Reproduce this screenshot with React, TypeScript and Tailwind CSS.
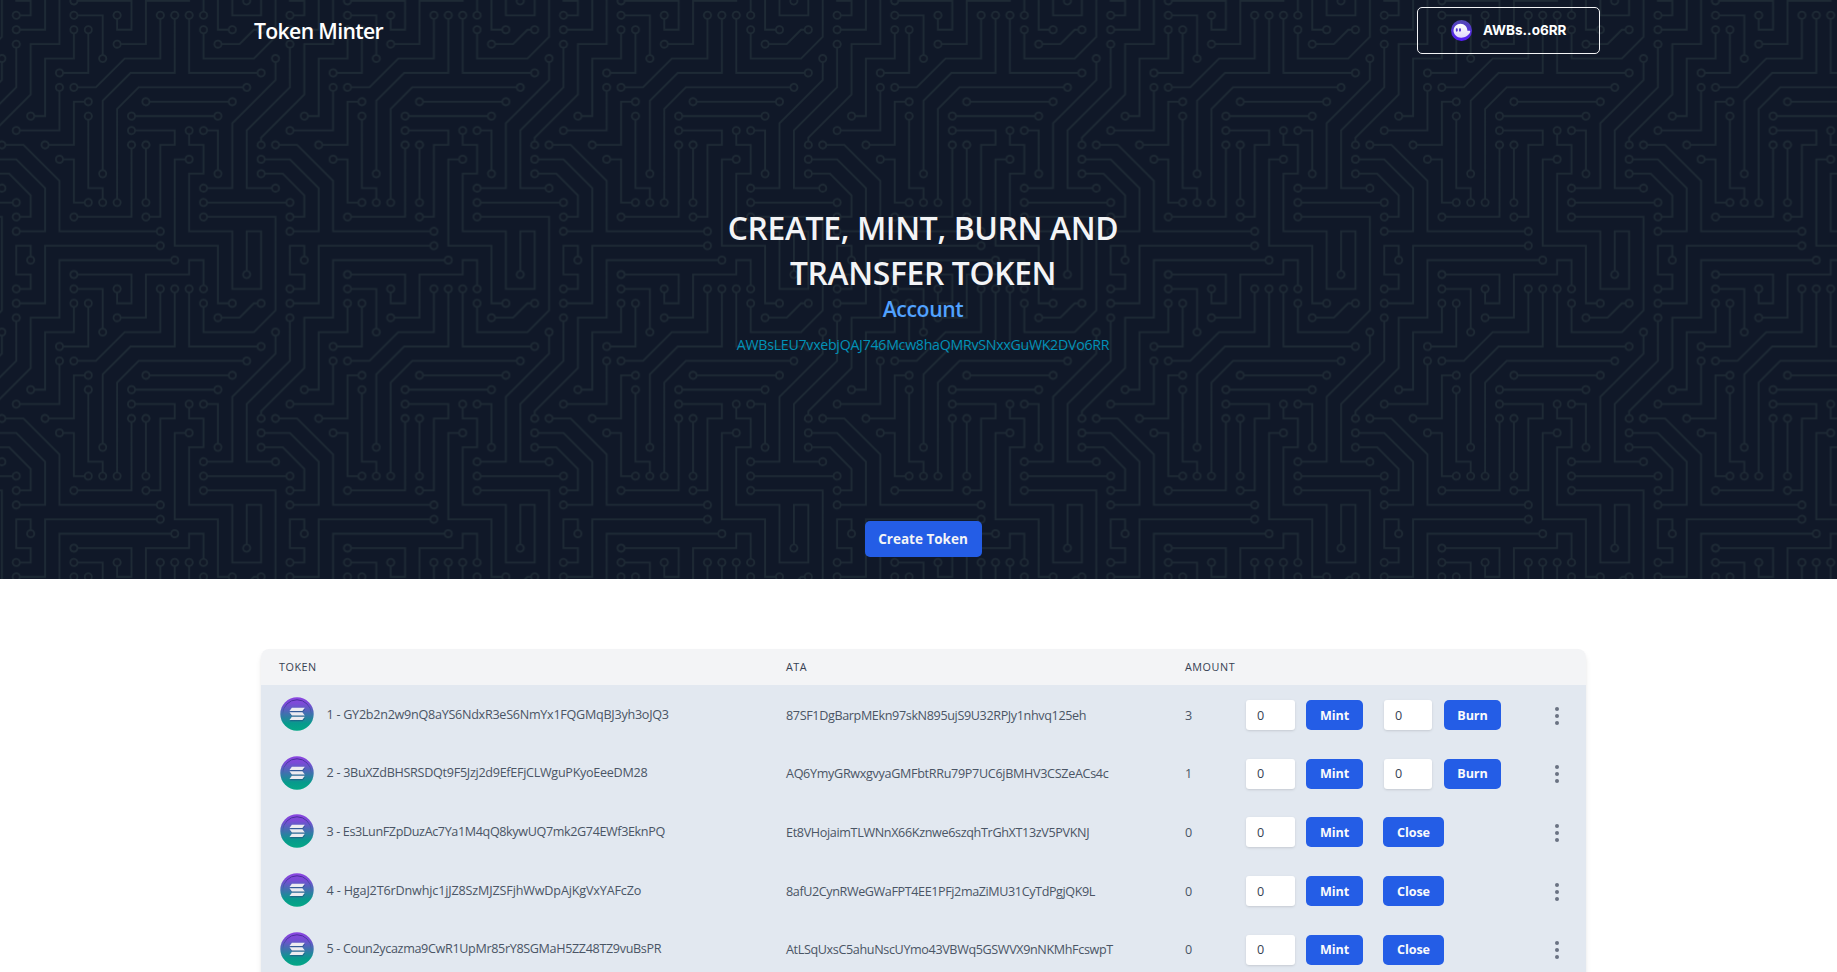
import React from "react";

const BOARD_PATH =
  "M44.1 224a5 5 0 1 1 0 2H0v-2h44.1zm160 48a5 5 0 1 1 0 2H82v-2h122.1zm57.8-46a5 5 0 1 1 0-2H304v2h-42.1zm0 16a5 5 0 1 1 0-2H304v2h-42.1zm6.2-114a5 5 0 1 1 0 2h-86.2a5 5 0 1 1 0-2h86.2zm-256-48a5 5 0 1 1 0 2H0v-2h12.1zm185.8 34a5 5 0 1 1 0-2h86.2a5 5 0 1 1 0 2h-86.2zM258 12.1a5 5 0 1 1-2 0V0h2v12.1zm-64 208a5 5 0 1 1-2 0v-54.2a5 5 0 1 1 2 0v54.2zm48-198.2V80h62v2h-64V21.9a5 5 0 1 1 2 0zm16 16V64h46v2h-48V37.9a5 5 0 1 1 2 0zm-128 96V208h16v12.1a5 5 0 1 1-2 0V210h-16v-76.1a5 5 0 1 1 2 0zm-5.9-21.9a5 5 0 1 1 0 2H114v48H85.9a5 5 0 1 1 0-2H112v-48h12.1zm-6.2 130a5 5 0 1 1 0-2H176v-74.1a5 5 0 1 1 2 0V242h-60.1zm-16-64a5 5 0 1 1 0-2H114v48h10.1a5 5 0 1 1 0 2H112v-48h-10.1zM66 284.1a5 5 0 1 1-2 0V274H50v30h-2v-32h18v12.1zM236.1 176a5 5 0 1 1 0 2H226v94h48v32h-2v-30h-48v-98h12.1zm25.8-30a5 5 0 1 1 0-2H274v44.1a5 5 0 1 1-2 0V146h-10.1zm-64 96a5 5 0 1 1 0-2H208v-80h16v-14h-42.1a5 5 0 1 1 0-2H226v18h-16v80h-12.1zm86.2-210a5 5 0 1 1 0 2H272V0h2v32h10.1zM98 101.9V146H53.9a5 5 0 1 1 0-2H96v-42.1a5 5 0 1 1 2 0zM53.9 34a5 5 0 1 1 0-2H80V0h2v34H53.9zm60.1 3.9V66H82v64H69.9a5 5 0 1 1 0-2H80V64h32V37.9a5 5 0 1 1 2 0zM101.9 82a5 5 0 1 1 0-2H128V37.9a5 5 0 1 1 2 0V82h-28.1zm16-64a5 5 0 1 1 0-2H146v44.1a5 5 0 1 1-2 0V18h-26.1zm102.2 270a5 5 0 1 1 0 2H98v14h-2v-16h124.1zM242 149.9V160h16v34h-16v62h48v48h-2v-46h-48v-66h16v-30h-16v-12.1a5 5 0 1 1 2 0zM53.9 18a5 5 0 1 1 0-2H64V2H48V0h18v18H53.9zm112 32a5 5 0 1 1 0-2H192V0h50v2h-48v48h-28.1zm-48-48a5 5 0 0 1-9.8-2h2.07a3 3 0 1 0 5.66 0H178v34h-18V21.9a5 5 0 1 1 2 0V32h14V2h-58.1zm0 96a5 5 0 1 1 0-2H137l32-32h39V21.9a5 5 0 1 1 2 0V66h-40.17l-32 32H117.9zm28.1 90.1a5 5 0 1 1-2 0v-76.51L175.59 80H224V21.9a5 5 0 1 1 2 0V82h-49.59L146 112.41v75.69zm16 32a5 5 0 1 1-2 0v-99.51L184.59 96H300.1a5 5 0 0 1 3.9-3.9v2.07a3 3 0 0 0 0 5.66v2.07a5 5 0 0 1-3.9-3.9H185.41L162 121.41v98.69zm-144-64a5 5 0 1 1-2 0v-3.51l48-48V48h32V0h2v50H66v55.41l-48 48v2.69zM50 53.9v43.51l-48 48V208h26.1a5 5 0 1 1 0 2H0v-65.41l48-48V53.9a5 5 0 1 1 2 0zm-16 16V89.41l-34 34v-2.82l32-32V69.9a5 5 0 1 1 2 0zM12.1 32a5 5 0 1 1 0 2H9.41L0 43.41V40.6L8.59 32h3.51zm265.8 18a5 5 0 1 1 0-2h18.69l7.41-7.41v2.82L297.41 50H277.9zm-16 160a5 5 0 1 1 0-2H288v-71.41l16-16v2.82l-14 14V210h-28.1zm-208 32a5 5 0 1 1 0-2H64v-22.59L40.59 194H21.9a5 5 0 1 1 0-2H41.41L66 216.59V242H53.9zm150.2 14a5 5 0 1 1 0 2H96v-56.6L56.6 162H37.9a5 5 0 1 1 0-2h19.5L98 200.6V256h106.1zm-150.2 2a5 5 0 1 1 0-2H80v-46.59L48.59 178H21.9a5 5 0 1 1 0-2H49.41L82 208.59V258H53.9zM34 39.8v1.61L9.41 66H0v-2h8.59L32 40.59V0h2v39.8zM2 300.1a5 5 0 0 1 3.9 3.9H3.83A3 3 0 0 0 0 302.17V256h18v48h-2v-46H2v42.1zM34 241v63h-2v-62H0v-2h34v1zM17 18H0v-2h16V0h2v18h-1zm273-2h14v2h-16V0h2v16zm-32 273v15h-2v-14h-14v14h-2v-16h18v1zM0 92.1A5.02 5.02 0 0 1 6 97a5 5 0 0 1-6 4.9v-2.07a3 3 0 1 0 0-5.66V92.1zM80 272h2v32h-2v-32zm37.9 32h-2.07a3 3 0 0 0-5.66 0h-2.07a5 5 0 0 1 9.8 0zM5.9 0A5.02 5.02 0 0 1 0 5.9V3.83A3 3 0 0 0 3.83 0H5.9zm294.2 0h2.07A3 3 0 0 0 304 3.83V5.9a5 5 0 0 1-3.9-5.9zm3.9 300.1v2.07a3 3 0 0 0-1.83 1.83h-2.07a5 5 0 0 1 3.9-3.9z";

const PADS: [number, number][] = [
  [49, 225], [209, 273], [257, 225], [257, 241], [273, 129], [177, 129], [17, 81], [193, 113], [289, 113],
  [257, 17], [193, 225], [193, 161], [241, 17], [257, 33], [129, 129], [145, 225], [129, 113], [81, 161],
  [113, 241], [177, 161], [97, 177], [129, 225], [65, 289], [241, 177], [257, 145], [273, 193], [193, 241],
  [177, 145], [289, 33], [49, 145], [97, 97], [49, 33], [113, 33], [65, 129], [97, 81], [129, 33], [113, 17],
  [145, 65], [225, 289], [241, 145], [49, 17], [161, 49], [161, 17], [113, 97], [209, 17], [145, 193],
  [225, 17], [161, 225], [17, 161], [33, 209], [49, 49], [33, 65], [17, 33], [273, 49], [257, 209],
  [49, 241], [17, 193], [209, 257], [33, 161], [49, 257], [17, 177],
];

function CircuitBackdrop() {
  return (
    <svg className="absolute inset-0 h-full w-full" aria-hidden="true">
      <defs>
        <pattern
          id="board"
          width="304"
          height="304"
          patternUnits="userSpaceOnUse"
          patternTransform="translate(-27.8 0) scale(0.9)"
        >
          <path d={BOARD_PATH} fill="#1e2a35" />
          {PADS.map(([x, y]) => (
            <circle key={`${x}-${y}`} cx={x} cy={y} r="3" fill="#111827" />
          ))}
        </pattern>
      </defs>
      <rect width="100%" height="100%" fill="url(#board)" />
    </svg>
  );
}

function PhantomIcon() {
  return (
    <svg className="h-[21px] w-[21px]" viewBox="0 0 108 108">
      <defs>
        <linearGradient id="ph-bg" x1="0" y1="0" x2="0" y2="1">
          <stop offset="0" stopColor="#534bb1" />
          <stop offset="1" stopColor="#551bf9" />
        </linearGradient>
        <linearGradient id="ph-body" x1="0" y1="0" x2="0" y2="1">
          <stop offset="0" stopColor="#ffffff" />
          <stop offset="1" stopColor="#ffffff" stopOpacity="0.82" />
        </linearGradient>
      </defs>
      <circle cx="54" cy="54" r="54" fill="url(#ph-bg)" />
      <path
        fill="url(#ph-body)"
        fillRule="evenodd"
        d="M94.07 54.91H84.44C84.44 35.29 68.47 19.38 48.78 19.38C29.33 19.38 13.51 34.9 13.12 54.19C12.72 74.12 31.5 91.43 51.51 91.43H54.02C71.67 91.43 95.32 77.67 99.01 60.9C99.69 57.8 97.24 54.91 94.07 54.91ZM34.5 55.43c0 2.62-2.15 4.77-4.79 4.77s-4.79-2.15-4.79-4.77v-7.71c0-2.62 2.15-4.77 4.79-4.77s4.79 2.15 4.79 4.77v7.71ZM51.1 55.43c0 2.62-2.15 4.77-4.79 4.77s-4.79-2.15-4.79-4.77v-7.71c0-2.62 2.15-4.77 4.79-4.77s4.79 2.15 4.79 4.77v7.71Z"
      />
    </svg>
  );
}

function SolanaCoin() {
  return (
    <svg className="h-[34px] w-[34px] shrink-0" viewBox="0 0 34 34">
      <defs>
        <linearGradient id="coin" x1="0" y1="0" x2="0" y2="1">
          <stop offset="0" stopColor="#8a45e0" />
          <stop offset="0.2" stopColor="#7a4bd6" />
          <stop offset="0.5" stopColor="#3f72ae" />
          <stop offset="0.78" stopColor="#079a8c" />
          <stop offset="1" stopColor="#04a786" />
        </linearGradient>
        <linearGradient id="coin-rim" x1="0" y1="0" x2="0" y2="1">
          <stop offset="0" stopColor="#4a2a9c" />
          <stop offset="0.55" stopColor="#3a6fa8" stopOpacity="0.5" />
          <stop offset="1" stopColor="#04a786" stopOpacity="0" />
        </linearGradient>
      </defs>
      <circle cx="17" cy="17" r="16.7" fill="url(#coin)" />
      <circle cx="17" cy="17" r="14.2" fill="none" stroke="url(#coin-rim)" strokeWidth="1" />
      <g fill="#1d4f7c" fillOpacity="0.55" transform="translate(0.4 1)">
        <path d="M11.9 11h12.9l-2.4 3.2H9.5zM9.5 15.5h12.9l2.4 3.2H11.9zM11.9 20h12.9l-2.4 3.2H9.5z" />
      </g>
      <path
        fill="#ecebf0"
        d="M11.9 10.8h12.9l-2.4 3.2H9.5zM9.5 15.3h12.9l2.4 3.2H11.9zM11.9 19.8h12.9l-2.4 3.2H9.5z"
      />
    </svg>
  );
}

interface TokenRow {
  mint: string;
  mintTracking: string;
  ata: string;
  ataTracking: string;
  amount: number;
}

const TOKENS: TokenRow[] = [
  { mint: "GY2b2n2w9nQ8aYS6NdxR3eS6NmYx1FQGMqBJ3yh3oJQ3", mintTracking: "tracking-[-0.27px]", ata: "87SF1DgBarpMEkn97skN895ujS9U32RPJy1nhvq125eh", ataTracking: "tracking-[-0.37px]", amount: 3 },
  { mint: "3BuXZdBHSRSDQt9F5Jzj2d9EfEFjCLWguPKyoEeeDM28", mintTracking: "tracking-[-0.29px]", ata: "AQ6YmyGRwxgvyaGMFbtRRu79P7UC6jBMHV3CSZeACs4c", ataTracking: "tracking-[-0.32px]", amount: 1 },
  { mint: "Es3LunFZpDuzAc7Ya1M4qQ8kywUQ7mk2G74EWf3EknPQ", mintTracking: "tracking-[-0.38px]", ata: "Et8VHojaimTLWNnX66Kznwe6szqhTrGhXT13zV5PVKNJ", ataTracking: "tracking-[-0.35px]", amount: 0 },
  { mint: "HgaJ2T6rDnwhjc1jJZ8SzMJZSFjhWwDpAjKgVxYAFcZo", mintTracking: "tracking-[-0.15px]", ata: "8afU2CynRWeGWaFPT4EE1PFj2maZiMU31CyTdPgjQK9L", ataTracking: "tracking-[-0.4px]", amount: 0 },
  { mint: "Coun2ycazma9CwR1UpMr85rY8SGMaH5ZZ48TZ9vuBsPR", mintTracking: "tracking-[-0.35px]", ata: "AtLSqUxsC5ahuNscUYmo43VBWq5GSWVX9nNKMhFcswpT", ataTracking: "tracking-[-0.37px]", amount: 0 },
];

function AmountInput({ className }: { className: string }) {
  return (
    <div className={`flex h-[30px] items-center rounded-[3px] bg-white pt-[2px] pl-[11px] text-[12.6px] text-gray-700 shadow ${className}`}>
      0
    </div>
  );
}

function ActionButton({ label, className }: { label: string; className: string }) {
  return (
    <button className={`flex h-[30px] items-center justify-center rounded-[5px] bg-[#245de6] pt-[2px] text-[12.6px] font-bold tracking-[-0.1px] text-gray-50 ${className}`}>
      {label}
    </button>
  );
}

function Row({ token, index }: { token: TokenRow; index: number }) {
  return (
    <div className="flex h-[58.6px] items-center bg-slate-200 pl-[19px] text-[12.6px] text-gray-600">
      <div className="flex w-[506px] items-center">
        <SolanaCoin />
        <span className={`ml-[12.5px] pt-[2px] whitespace-nowrap ${token.mintTracking}`}>
          {index + 1} - {token.mint}
        </span>
      </div>
      <div className={`w-[399px] whitespace-nowrap pt-[4px] ${token.ataTracking}`}>{token.ata}</div>
      <div className="w-[61px] pt-[4px]">{token.amount}</div>
      <div className="flex flex-1 items-center pt-[2px]">
        <AmountInput className="w-[49px]" />
        <ActionButton label="Mint" className="ml-[11px] w-[57px]" />
        {token.amount > 0 ? (
          <>
            <AmountInput className="ml-[21px] w-[48px]" />
            <ActionButton label="Burn" className="ml-[12px] w-[57px]" />
          </>
        ) : (
          <ActionButton label="Close" className="ml-[20px] w-[61px]" />
        )}
      </div>
      <div className="mr-[27px] flex flex-col gap-[3px] pt-[3px]">
        <span className="h-1 w-1 rounded-full bg-gray-500" />
        <span className="h-1 w-1 rounded-full bg-gray-500" />
        <span className="h-1 w-1 rounded-full bg-gray-500" />
      </div>
    </div>
  );
}

export default function App() {
  return (
    <div className="h-[972px] overflow-hidden bg-white font-['Open_Sans','Noto_Sans',sans-serif]">
      <section className="relative h-[579px] bg-gray-900">
        <CircuitBackdrop />
        <div className="relative flex h-full flex-col">
          <header className="flex items-start justify-between pr-[237px] pl-[254px] pt-[7px]">
            <h1 className="pt-[8px] text-[21.2px] leading-[32px] font-semibold tracking-[-0.65px] text-white">Token Minter</h1>
            <button className="flex h-[47px] w-[183px] items-center rounded-[5px] border border-gray-100 pb-[1px] pl-[33px]">
              <PhantomIcon />
              <span className="ml-[11px] font-['Inter',sans-serif] text-[13.5px] font-bold text-white">AWBs..o6RR</span>
            </button>
          </header>
          <div className="mt-[151px] flex flex-col items-center pl-[9px] text-center">
            <h2 className="w-[460px] text-[31.8px] leading-[45px] font-semibold tracking-[-0.33px] text-gray-100">
              CREATE, MINT, BURN AND TRANSFER TOKEN
            </h2>
            <p className="text-[21.2px] leading-[28px] font-semibold tracking-[-0.4px] text-blue-400">Account</p>
            <p className="mt-[12px] text-[14.2px] leading-[20px] tracking-[-0.28px] text-cyan-600">
              AWBsLEU7vxebjQAJ746Mcw8haQMRvSNxxGuWK2DVo6RR
            </p>
            <button className="mt-[166px] h-[36px] w-[117px] rounded-[5px] bg-[#245de6] text-[13.5px] font-bold text-gray-100">
              Create Token
            </button>
          </div>
        </div>
      </section>
      <main className="mt-[70px] ml-[261px] w-[1325px] overflow-hidden rounded-t-lg shadow-md">
        <div className="flex h-[36px] items-center bg-gray-100 pl-[18px] text-[10.8px] font-medium tracking-[0.54px] text-gray-700">
          <div className="w-[507px]">TOKEN</div>
          <div className="w-[399px]">ATA</div>
          <div>AMOUNT</div>
        </div>
        {TOKENS.map((token, i) => (
          <Row key={token.mint} token={token} index={i} />
        ))}
      </main>
    </div>
  );
}
